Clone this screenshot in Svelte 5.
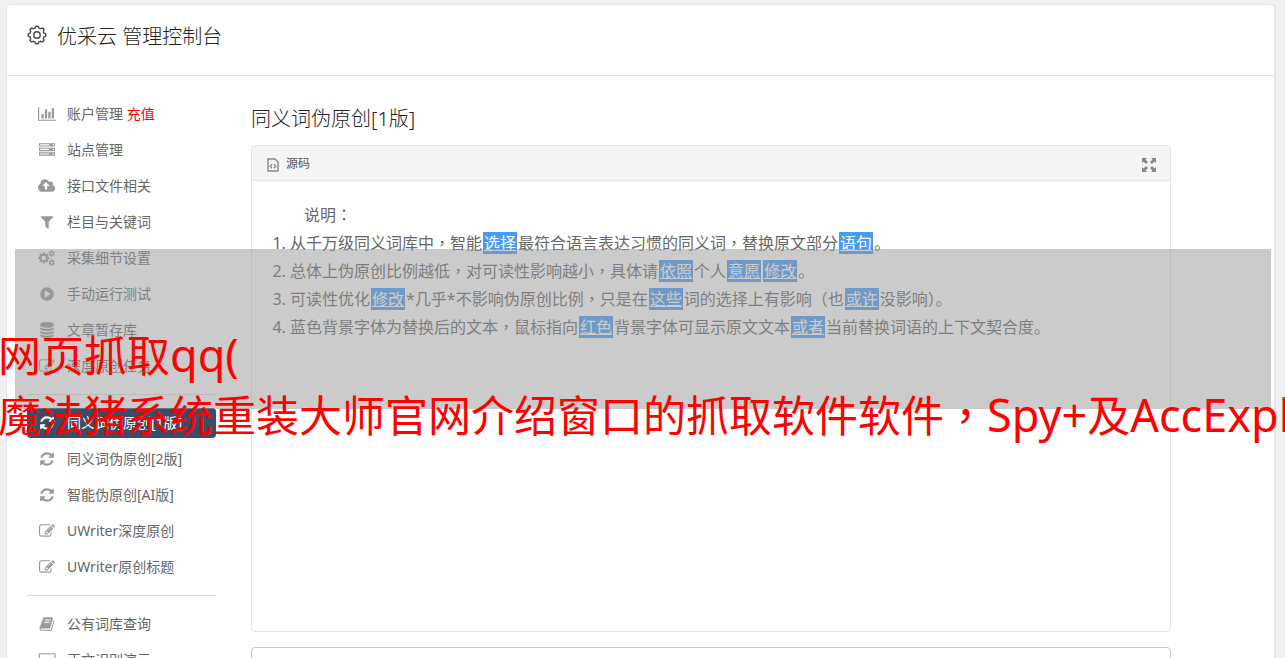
<script>
  const groups = [
    [
      { icon: "chart", name: "账户管理", extra: "充值" },
      { icon: "server", name: "站点管理" },
      { icon: "cloud", name: "接口文件相关" },
      { icon: "filter", name: "栏目与关键词" },
      { icon: "cogs", name: "采集细节设置" },
      { icon: "play", name: "手动运行测试" },
      { icon: "database", name: "文章暂存库" },
      { icon: "edit", name: "深度原创任务" },
    ],
    [
      { icon: "refresh", name: "同义词伪原创[1版]", active: true },
      { icon: "refresh", name: "同义词伪原创[2版]" },
      { icon: "refresh", name: "智能伪原创[AI版]" },
      { icon: "edit", name: "UWriter深度原创" },
      { icon: "edit", name: "UWriter原创标题" },
    ],
    [
      { icon: "book", name: "公有词库查询" },
      { icon: "laptop", name: "正文识别演示" },
    ],
  ];

  // every odd part is a replaced word
  const lines = [
    ["从千万级同义词库中，智能", "选择", "最符合语言表达习惯的同义词，替换原文部分", "语句", "。"],
    ["总体上伪原创比例越低，对可读性影响越小，具体请", "依照", "个人", "意愿", "", "修改", "。"],
    ["可读性优化", "修改", "*几乎*不影响伪原创比例，只是在", "这些", "词的选择上有影响（也", "或许", "没影响）。"],
    ["蓝色背景字体为替换后的文本，鼠标指向", "红色", "背景字体可显示原文文本", "或者", "当前替换词语的上下文契合度。"],
  ];

  function gear(cx, cy, r, depth, teeth) {
    const pts = [];
    const n = teeth * 12;
    for (let i = 0; i < n; i++) {
      const a = (i / n) * Math.PI * 2;
      const w = Math.max(-1, Math.min(1, Math.cos(a * teeth) * 1.8));
      const d = r + depth * w;
      pts.push((cx + d * Math.sin(a)).toFixed(2) + " " + (cy - d * Math.cos(a)).toFixed(2));
    }
    return "M" + pts.join("L") + "z";
  }

  function hole(cx, cy, r) {
    return `M${cx - r} ${cy}a${r} ${r} 0 1 0 ${r * 2} 0a${r} ${r} 0 1 0 ${-r * 2} 0z`;
  }

  const disc = "q0 69-103 128t-280 93.5-385 34.5-385-34.5-280-93.5-103-128v-170q119 84 325 127t443 43z";

  const icons = {
    chart: { w: 2048, d: "M640 896v512h-256v-512h256zm384-512v1024h-256v-1024h256zm1024 1152v128h-2048v-1536h128v1408h1920zm-640-896v768h-256v-768h256zm384-384v1152h-256v-1152h256z" },
    server: { w: 1792, d: [128, 640, 1152].map((y) => `M0 ${y}h1792v384h-1792zM128 ${y + 128}v128h1024v-128z` + hole(1600, y + 192, 90)).join("") },
    cloud: { w: 1920, d: "M1280 864q0-14-9-23l-352-352q-9-9-23-9t-23 9l-351 351q-10 12-10 24 0 14 9 23t23 9h224v352q0 13 9.5 22.5t22.5 9.5h192q13 0 22.5-9.5t9.5-22.5v-352h224q13 0 22.5-9.5t9.5-22.5zm640 288q0 159-112.5 271.5t-271.5 112.5h-1088q-185 0-316.5-131.5t-131.5-316.5q0-130 70-240t188-165q-2-30-2-43 0-212 150-362t362-150q156 0 285.5 87t188.5 231q71-62 166-62 106 0 181 75t75 181q0 76-41 138 130 31 213.5 135.5t83.5 238.5z" },
    filter: { w: 1792, d: "M1595 295q17 41-14 70l-493 493v742q0 42-39 59-13 5-25 5-27 0-45-19l-256-256q-19-19-19-45v-486l-493-493q-31-29-14-70 17-39 59-39h1280q42 0 59 39z" },
    cogs: { w: 1920, d: gear(640, 896, 560, 80, 8) + hole(640, 896, 256) + gear(1536, 384, 315, 60, 6) + hole(1536, 384, 128) + gear(1536, 1408, 315, 60, 6) + hole(1536, 1408, 128) },
    play: { w: 1792, d: hole(896, 896, 768) + "M640 560v672q0 74 64 50l510-330q64-56 0-112l-510-330q-64-24-64 50z" },
    database: { w: 1792, d: `M896 768q237 0 443-43t325-127v170${disc}M896 1536q237 0 443-43t325-127v170${disc}M896 1152q237 0 443-43t325-127v170${disc}M896 0q208 0 385 34.5t280 93.5 103 128v128q0 69-103 128t-280 93.5-385 34.5-385-34.5-280-93.5-103-128v-128q0-69 103-128t280-93.5 385-34.5z` },
    edit: { w: 1792, d: "M888 1184l116-116-152-152-116 116v56h96v96h56zm440-720q-16-16-33 1l-350 350q-17 17-1 33t33-1l350-350q17-17 1-33zm80 594v190q0 119-84.5 203.5t-203.5 84.5h-832q-119 0-203.5-84.5t-84.5-203.5v-832q0-119 84.5-203.5t203.5-84.5h832q63 0 117 25 15 7 18 23 3 17-9 29l-49 49q-14 14-32 8-23-6-45-6h-832q-66 0-113 47t-47 113v832q0 66 47 113t113 47h832q66 0 113-47t47-113v-126q0-13 9-22l64-64q15-15 35-7t20 29zm-96-738l288 288-672 672h-288v-288zm444 132l-92 92-288-288 92-92q28-28 68-28t68 28l152 152q28 28 28 68t-28 68z" },
    refresh: { w: 1792, d: "M1639 1056q0 5-1 7-64 268-268 434.5t-478 166.5q-146 0-282.5-55t-243.5-157l-129 129q-19 19-45 19t-45-19-19-45v-448q0-26 19-45t45-19h448q26 0 45 19t19 45-19 45l-137 137q71 66 161 102t187 36q134 0 250-65t186-179q11-17 53-117 8-23 30-23h192q13 0 22.5 9.5t9.5 22.5zm25-800v448q0 26-19 45t-45 19h-448q-26 0-45-19t-19-45 19-45l138-138q-148-137-349-137-134 0-250 65t-186 179q-11 17-53 117-8 23-30 23h-199q-13 0-22.5-9.5t-9.5-22.5v-7q65-268 270-434.5t480-166.5q146 0 284 55.5t245 156.5l130-129q19-19 45-19t45 19 19 45z" },
    book: { w: 1792, d: "M1703 478q40 57 18 129l-275 906q-19 64-76.5 107.5t-122.5 43.5h-923q-77 0-148.5-53.5t-99.5-131.5q-24-67-2-127 0-4 3-27t4-37q1-8-3-21.5t-3-19.5q2-11 8-21t16.5-23.5 16.5-23.5q23-38 45-91.5t30-91.5q3-10 .5-30t-.5-28q3-11 17-28t17-23q21-36 42-92t25-90q1-9-2.5-32t.5-28q4-13 22-30.5t22-22.5q19-26 42.5-84.5t27.5-96.5q1-8-3-25.5t-2-26.5q2-8 9-18t18-23 17-21q8-12 16.5-30.5t15-35 16-36 19.5-32 26.5-23.5 36-11.5 47.5 5.5l-1 3q38-9 51-9h761q74 0 114 56t18 130l-274 906q-36 119-71.5 153.5t-128.5 34.5h-869q-27 0-38 15-11 16-1 43 24 70 144 70h923q29 0 56-15.5t35-41.5l300-987q7-22 5-57 38 15 59 43zm-1064 2q-4 13 2 22.5t20 9.5h608q13 0 25.5-9.5t16.5-22.5l21-64q4-13-2-22.5t-20-9.5h-608q-13 0-25.5 9.5t-16.5 22.5zm-83 256q-4 13 2 22.5t20 9.5h608q13 0 25.5-9.5t16.5-22.5l21-64q4-13-2-22.5t-20-9.5h-608q-13 0-25.5 9.5t-16.5 22.5z" },
    laptop: { w: 2048, d: "M200 128h1648q120 0 120 120v1000q0 120-120 120h-1648q-120 0-120-120v-1000q0-120 120-120zM208 256v984h1632v-984zM0 1472h2048v96q0 96-160 96h-1728q-160 0-160-96z" },
  };
</script>

<!-- commas and colons sit in the middle of their cell -->
{#snippet centered(text)}
  {#each text.split(/([，：])/) as t, i}{#if i % 2}<span class="mark">{t}</span>{:else}{t}{/if}{/each}
{/snippet}

<div class="page">
  <div class="panel">
    <header>
      <svg class="gear" viewBox="0 0 20 20" aria-hidden="true">
        <path d={gear(10, 10, 8, 0.8, 8)} />
        <circle cx="10" cy="10" r="3.2" />
      </svg>
      <h1>优采云 管理控制台</h1>
    </header>

    <div class="content">
      <nav>
        {#each groups as items, g}
          {#if g > 0}<hr />{/if}
          {#each items as item}
            <a href="#menu" class:active={item.active}>
              <span class="icon">
                <svg viewBox="0 0 {icons[item.icon].w} 1792" aria-hidden="true">
                  <path fill-rule="evenodd" d={icons[item.icon].d} />
                </svg>
              </span>
              <span class="name">{item.name}{#if item.extra}{" "}<em>{item.extra}</em>{/if}</span>
            </a>
          {/each}
        {/each}
      </nav>

      <main>
        <h2>同义词伪原创[1版]</h2>
        <div class="editor">
          <div class="toolbar">
            <button class="source">
              <svg width="12" height="14" viewBox="0 0 12 14" aria-hidden="true">
                <path d="M1 1h7l3 3v9H1z" stroke-width="1.4" />
                <path d="M5 6.2L3.2 8.2L5 10.2M7 6.2L8.8 8.2L7 10.2" stroke-width="1.3" />
              </svg>
              源码
            </button>
            <button class="expand" aria-label="全屏">
              <svg width="14" height="14" viewBox="0 0 14 14" aria-hidden="true">
                <path d="M0 0h5L3.5 1.5L6 4L4 6L1.5 3.5L0 5zM14 0v5L12.5 3.5L10 6L8 4L10.5 1.5L9 0zM0 14V9L1.5 10.5L4 8L6 10L3.5 12.5L5 14zM14 14H9L10.5 12.5L8 10L10 8L12.5 10.5L14 9z" />
              </svg>
            </button>
          </div>
          <div class="text">
            <p>{@render centered("说明：")}</p>
            <ol>
              {#each lines as parts}
                <li>
                  {#each parts as part, i}{#if i % 2}<a href="#word">{part}</a>{:else}{@render centered(part)}{/if}{/each}
                </li>
              {/each}
            </ol>
          </div>
        </div>
        <textarea aria-label="原文"></textarea>
      </main>
    </div>
  </div>

  <div class="shade"></div>
  <div class="caption">
    <div>网页抓取<span class="latin">qq(</span></div>
    <div>{@render centered("魔法猪系统重装大师官网介绍窗口的抓取软件软件，")}<span class="latin">Spy+</span>及<span class="latin">AccExpl</span></div>
  </div>
</div>

<style>
  :global(body) {
    margin: 0;
    background: #f1f1f1;
  }

  .page {
    position: relative;
    height: 100vh;
    overflow: hidden;
    box-sizing: border-box;
    padding: 4px 10px 0 6px;
    font-family: "Noto Sans", "Noto Sans CJK SC", sans-serif;
    color: #222;
  }

  .mark {
    font-family: "Noto Sans CJK TC", sans-serif;
    line-height: 1;
  }

  .panel {
    background: #fff;
    border: 1px solid #e5e5e5;
    border-radius: 4px;
    box-shadow: 1px 0 0 #e5e5e5;
  }

  header {
    display: flex;
    align-items: center;
    gap: 10px;
    height: 63px;
    padding: 0 20px 7px;
    border-bottom: 1px solid #e5e5e5;
  }

  h1,
  h2 {
    margin: 0;
    font-size: 20px;
    line-height: 28px;
    font-weight: 300;
  }

  .gear {
    width: 20px;
    height: 20px;
    margin-bottom: 4px;
    fill: none;
    stroke: #444;
    stroke-width: 1.4;
  }

  .content {
    display: flex;
    gap: 35px;
    padding: 23px 20px;
  }

  nav {
    flex: 0 0 189px;
    display: flex;
    flex-direction: column;
    gap: 6px;
  }

  nav a {
    display: flex;
    align-items: center;
    gap: 10px;
    height: 30px;
    padding-left: 10px;
    border-radius: 4px;
    font-size: 14px;
    color: #666;
    text-decoration: none;
    white-space: nowrap;
  }

  nav a.active {
    background: #3c4c66;
    color: #fff;
  }

  .name {
    padding-bottom: 2px;
  }

  nav em {
    font-style: normal;
    color: #f00;
  }

  nav hr {
    width: 100%;
    height: 1px;
    margin: 7px 0;
    border: 0;
    background: #dcdcdc;
  }

  .icon {
    display: flex;
    justify-content: center;
    width: 20px;
  }

  .icon svg {
    height: 16px;
    fill: #999;
  }

  .active .icon svg {
    fill: #fff;
  }

  main {
    flex: 1;
    max-width: 920px;
    padding-top: 6px;
  }

  h2 {
    margin-bottom: 12px;
  }

  .editor {
    border: 1px solid #e5e5e5;
    border-radius: 4px;
    overflow: hidden;
  }

  .toolbar {
    display: flex;
    justify-content: space-between;
    align-items: center;
    height: 34px;
    padding: 0 14px 0 15px;
    background: #f5f5f5;
    border-bottom: 1px solid #e5e5e5;
  }

  button {
    display: flex;
    align-items: center;
    gap: 7px;
    padding: 0;
    border: 0;
    background: none;
    font: inherit;
    font-size: 12px;
    color: #555;
    cursor: pointer;
  }

  button svg {
    margin-top: 3px;
  }

  .source svg {
    fill: none;
    stroke: #888;
  }

  .expand svg {
    fill: #888;
  }

  .text {
    min-height: 410px;
    padding: 20px;
    font-size: 16px;
    line-height: 28px;
    color: #666;
  }

  .text p {
    margin: 0;
    text-indent: 2em;
  }

  ol {
    margin: 0;
    padding-left: 18px;
  }

  li a {
    margin: 0 1px;
    padding: 0 1px;
    background: #479bf5;
    color: #fff;
  }

  textarea {
    display: block;
    width: 100%;
    height: 200px;
    margin-top: 15px;
    box-sizing: border-box;
    border: 1px solid #c9c9c9;
    border-radius: 4px;
    resize: none;
  }

  .shade {
    position: absolute;
    top: 249px;
    left: 15px;
    right: 14px;
    height: 160px;
    background: rgba(151, 151, 151, 0.5);
  }

  .caption {
    position: absolute;
    top: 326px;
    left: -2px;
    font-size: 43px;
    line-height: 60px;
    color: #f00;
    white-space: nowrap;
  }

  .latin {
    font-size: 45px;
    line-height: 1;
  }
</style>
